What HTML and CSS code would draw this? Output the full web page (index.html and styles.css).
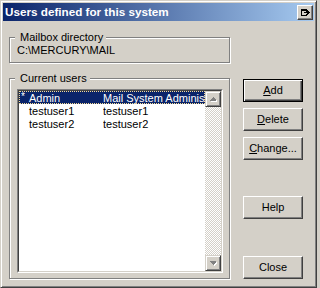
FILE: index.html
```html
<!DOCTYPE html>
<html>
<head>
<meta charset="utf-8">
<link rel="stylesheet" href="styles.css">
</head>
<body>
<div class="window">
  <div class="titlebar">
    <span class="title">Users defined for this system</span>
    <span class="cap-btn">
      <svg width="9" height="7" viewBox="0 0 9 7" shape-rendering="crispEdges">
        <rect x="0" y="0" width="6" height="2" fill="#000"/>
        <rect x="0" y="0" width="1" height="7" fill="#000"/>
        <rect x="0" y="6" width="6" height="1" fill="#000"/>
        <rect x="5" y="2" width="1" height="1" fill="#000"/>
        <rect x="5" y="5" width="1" height="1" fill="#000"/>
        <rect x="3" y="3" width="3" height="1" fill="#000"/>
        <polygon points="6,1 9,3.5 6,6" fill="#000"/>
      </svg>
    </span>
  </div>
  <div class="content">
    <div class="left">
      <div class="group group-dir">
        <span class="group-label">Mailbox directory</span>
        <div class="dir">C:\MERCURY\MAIL</div>
      </div>
      <div class="group group-users">
        <span class="group-label">Current users</span>
        <div class="listbox">
          <div class="listbox-inner">
            <div class="rows">
              <div class="row selected"><span class="mark">*</span><span class="c1">Admin</span><span class="c2">Mail System Administr</span></div>
              <div class="row"><span class="mark"></span><span class="c1">testuser1</span><span class="c2">testuser1</span></div>
              <div class="row"><span class="mark"></span><span class="c1">testuser2</span><span class="c2">testuser2</span></div>
            </div>
            <div class="scrollbar">
              <div class="sb-btn">
                <svg width="7" height="5" viewBox="0 0 7 5" shape-rendering="crispEdges">
                  <polygon points="1,4 4,1 7,4 7,5 1,5" fill="#fff"/>
                  <polygon points="0,3 3,0 3,0 6,3 6,4 0,4" fill="#808080"/>
                </svg>
              </div>
              <div class="sb-track"></div>
              <div class="sb-btn">
                <svg width="7" height="5" viewBox="0 0 7 5" shape-rendering="crispEdges">
                  <polygon points="1,1 7,1 7,2 4,5 1,2" fill="#fff"/>
                  <polygon points="0,0 6,0 6,1 3,4 0,1" fill="#808080"/>
                </svg>
              </div>
            </div>
          </div>
        </div>
      </div>
    </div>
    <div class="buttons">
      <div class="btn default"><span><u>A</u>dd</span></div>
      <div class="btn btn-delete"><span><u>D</u>elete</span></div>
      <div class="btn btn-change"><span><u>C</u>hange...</span></div>
      <div class="btn btn-help"><span>Help</span></div>
      <div class="btn btn-close"><span>Close</span></div>
    </div>
  </div>
</div>
</body>
</html>
```

FILE: styles.css
```css
html, body {
  margin: 0;
  padding: 0;
  background: #d4d0c8;
}

body {
  font-family: "Liberation Sans", Arial, sans-serif;
  font-size: 11px;
  color: #000;
}

.window {
  width: 317px;
  height: 288px;
  box-sizing: border-box;
  border: 1px solid;
  border-color: #d4d0c8 #404040 #404040 #d4d0c8;
  box-shadow: inset 1px 1px #fff, inset -1px -1px #808080;
  padding: 2px;
  background: #d4d0c8;
  overflow: hidden;
}

.titlebar {
  height: 18px;
  display: flex;
  align-items: center;
  background: linear-gradient(to right, #0a246a, #a6caf0);
  padding-left: 2px;
}

.title {
  font-weight: bold;
  font-size: 11.7px;
  color: #fff;
  white-space: nowrap;
  line-height: 18px;
}

.cap-btn {
  margin-left: auto;
  margin-right: 1px;
  width: 16px;
  height: 15px;
  box-sizing: border-box;
  background: #d4d0c8;
  border: 1px solid;
  border-color: #fff #404040 #404040 #fff;
  box-shadow: inset -1px -1px #808080;
  display: flex;
  align-items: center;
  justify-content: center;
  padding-left: 1px;
}

.cap-btn svg {
  display: block;
}

.content {
  display: flex;
  padding: 16px 0 0 6px;
}

.left {
  width: 221px;
  display: flex;
  flex-direction: column;
}

.group {
  position: relative;
  box-sizing: border-box;
  border: 1px solid #808080;
  box-shadow: inset 1px 1px #fff, 1px 1px #fff;
}

.group-label {
  position: absolute;
  top: -7px;
  left: 5px;
  padding: 0 3px 0 5px;
  background: #d4d0c8;
  line-height: 13px;
  white-space: nowrap;
}

.group-dir {
  height: 26px;
  padding: 6px 0 0 7px;
}

.dir {
  line-height: 13px;
}

.group-users {
  margin-top: 15px;
  height: 201px;
  padding: 10px 0 0 7px;
}

.listbox {
  width: 206px;
  height: 184px;
  box-sizing: border-box;
  border: 1px solid;
  border-color: #808080 #fff #fff #808080;
}

.listbox-inner {
  height: 100%;
  box-sizing: border-box;
  border: 1px solid;
  border-color: #404040 #d4d0c8 #d4d0c8 #404040;
  background: #fff;
  display: flex;
}

.rows {
  flex: 1;
  min-width: 0;
  overflow: hidden;
}

.row {
  display: flex;
  height: 13px;
  white-space: nowrap;
  overflow: hidden;
}

.row span {
  line-height: 13px;
  padding-top: 1px;
}

.row .mark {
  width: 8px;
  flex: none;
  padding-left: 2px;
  font-size: 10px;
  line-height: 9px;
  padding-top: 1px;
}

.row .c1 {
  width: 74px;
  flex: none;
}

.row .c2 {
  flex: 1;
  overflow: hidden;
}

.row.selected {
  background: #0a246a;
  color: #fff;
  outline: 1px dotted #f5db95;
  outline-offset: -1px;
}

.scrollbar {
  width: 16px;
  flex: none;
  display: flex;
  flex-direction: column;
}

.sb-btn {
  width: 16px;
  height: 16px;
  box-sizing: border-box;
  background: #d4d0c8;
  border: 1px solid;
  border-color: #d4d0c8 #404040 #404040 #d4d0c8;
  box-shadow: inset 1px 1px #fff, inset -1px -1px #808080;
  display: flex;
  align-items: center;
  justify-content: center;
  flex: none;
}

.sb-btn svg {
  display: block;
}

.sb-track {
  flex: 1;
  background-color: #fff;
  background-image: conic-gradient(#d4d0c8 25%, transparent 0 50%, #d4d0c8 0 75%, transparent 0);
  background-size: 2px 2px;
}

.buttons {
  margin-left: 13px;
  display: flex;
  flex-direction: column;
  padding-top: 42px;
}

.btn {
  width: 60px;
  height: 23px;
  box-sizing: border-box;
  background: #d4d0c8;
  border: 1px solid;
  border-color: #fff #404040 #404040 #fff;
  box-shadow: inset -1px -1px #808080;
  display: flex;
  align-items: center;
  justify-content: center;
  line-height: 13px;
  white-space: nowrap;
}

.btn.default {
  border-color: #000;
  box-shadow: inset 1px 1px #fff, inset -1px -1px #404040, inset -2px -2px #808080;
}

.btn-delete { margin-top: 6px; }
.btn-change { margin-top: 6px; }
.btn-help { margin-top: 36px; }
.btn-close { margin-top: 37px; }
```
